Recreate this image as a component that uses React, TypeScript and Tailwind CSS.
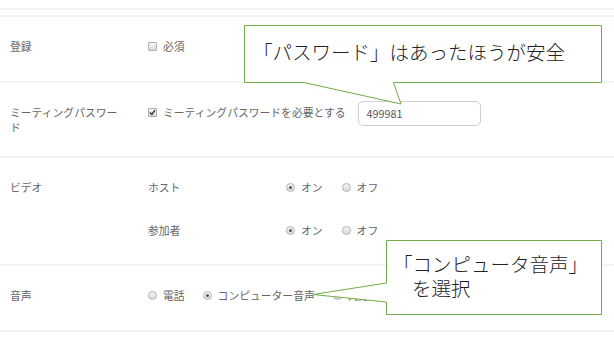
import React from 'react'

function Checkbox({ checked = false }: { checked?: boolean }) {
  return (
    <span className="relative flex h-[9px] w-[9px] shrink-0 items-center justify-center rounded-[1px] border border-[#adadad] bg-gradient-to-b from-[#f6f6f6] to-[#dadada]">
      {checked && (
        <svg width="7" height="7" viewBox="0 0 7 7" className="absolute">
          <path d="M1 3.6L2.8 5.4L6 1.2" fill="none" stroke="#333" strokeWidth="1.4" />
        </svg>
      )}
    </span>
  )
}

function Radio({ checked = false }: { checked?: boolean }) {
  return (
    <span className="flex h-[9px] w-[9px] shrink-0 items-center justify-center rounded-full border border-[#b3b3b3] bg-gradient-to-b from-[#f6f6f6] to-[#d9d9d9]">
      {checked && <span className="h-[3px] w-[3px] rounded-full bg-[#555]" />}
    </span>
  )
}

function Option({ control, children }: { control: React.ReactNode; children: React.ReactNode }) {
  return (
    <div className="flex items-center gap-[6px] whitespace-nowrap">
      {control}
      <span>{children}</span>
    </div>
  )
}

function Row({ label, className, children }: { label: string; className: string; children: React.ReactNode }) {
  return (
    <div className={`flex border-b-2 border-[#f3f3f3] pt-[22px] ${className}`}>
      <div className="w-[148px] shrink-0 pl-[10px] pr-[26px]">{label}</div>
      <div className="flex-1">{children}</div>
    </div>
  )
}

function OnOff() {
  return (
    <div className="flex gap-[19px]">
      <Option control={<Radio checked />}>オン</Option>
      <Option control={<Radio />}>オフ</Option>
    </div>
  )
}

export default function App() {
  return (
    <div className="relative h-[340px] w-[614px] overflow-hidden bg-white font-['Noto_Sans_CJK_JP','Noto_Sans',sans-serif] text-[10.8px] leading-[15px] text-[#666]">
      <div className="mt-[8px] h-[7px] border-t-2 border-[#f3f3f3]" />
      <div className="border-t-2 border-[#f3f3f3]">
        <Row label="登録" className="h-[66px]">
          <Option control={<Checkbox />}>必須</Option>
        </Row>

        <Row label="ミーティングパスワード" className="h-[75px]">
          <div className="flex items-center">
            <Option control={<Checkbox checked />}>ミーティングパスワードを必要とする</Option>
            <div className="-my-[5px] ml-[12px] flex h-[25px] w-[123px] translate-y-[1px] items-center rounded-[5px] border border-[#cfcfdb] px-[8px] text-[#555]">
              499981
            </div>
          </div>
        </Row>

        <Row label="ビデオ" className="h-[108px]">
          <div className="flex flex-col gap-[28px]">
            <div className="flex">
              <div className="w-[138px] shrink-0">ホスト</div>
              <OnOff />
            </div>
            <div className="flex">
              <div className="w-[138px] shrink-0">参加者</div>
              <OnOff />
            </div>
          </div>
        </Row>

        <Row label="音声" className="h-[66px]">
          <div className="flex gap-[18px]">
            <Option control={<Radio />}>電話</Option>
            <Option control={<Radio checked />}>コンピューター音声</Option>
            <Option control={<Radio />}>両方</Option>
          </div>
        </Row>
      </div>

      {/* callouts */}
      <svg className="pointer-events-none absolute inset-0" width="614" height="340">
        <path d="M244.5 25.5H601.5V82.5H393.5L401 104L304 82.5H244.5Z" fill="white" stroke="#70ad47" />
        <path d="M386.5 240.5H601.5V314.5H386.5V302L313 294.5L386.5 283Z" fill="white" stroke="#70ad47" />
      </svg>
      <div className="absolute left-[253px] top-[39px] whitespace-nowrap text-[19.5px] font-light leading-[26px] text-[#222]">
        「パスワード」はあったほうが安全
      </div>
      <div className="absolute left-[393px] top-[252px] whitespace-nowrap text-[19.5px] font-light leading-[24px] text-[#222]">
        <div>「コンピュータ音声」</div>
        <div className="pl-[19px]">を選択</div>
      </div>
    </div>
  )
}
